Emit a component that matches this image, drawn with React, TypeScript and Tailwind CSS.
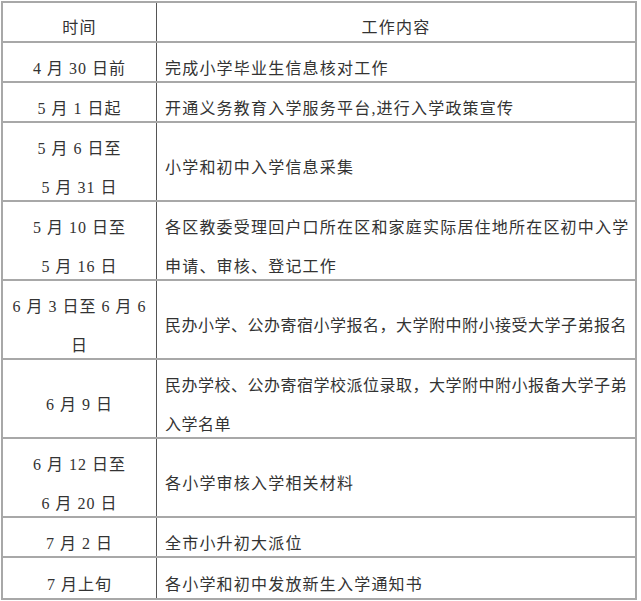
const rows: Array<{ time: string[]; work: string[]; tight?: boolean }> = [
  { time: ["4 月 30 日前"], work: ["完成小学毕业生信息核对工作"] },
  { time: ["5 月 1 日起"], work: ["开通义务教育入学服务平台,进行入学政策宣传"] },
  { time: ["5 月 6 日至", "5 月 31 日"], work: ["小学和初中入学信息采集"] },
  {
    time: ["5 月 10 日至", "5 月 16 日"],
    work: ["各区教委受理回户口所在区和家庭实际居住地所在区初中入学", "申请、审核、登记工作"],
  },
  {
    time: ["6 月 3 日至 6 月 6", "日"],
    work: ["民办小学、公办寄宿小学报名，大学附中附小接受大学子弟报名"],
    tight: true,
  },
  {
    time: ["6 月 9 日"],
    work: ["民办学校、公办寄宿学校派位录取，大学附中附小报备大学子弟", "入学名单"],
    tight: true,
  },
  { time: ["6 月 12 日至", "6 月 20 日"], work: ["各小学审核入学相关材料"] },
  { time: ["7 月 2 日"], work: ["全市小升初大派位"] },
  { time: ["7 月上旬"], work: ["各小学和初中发放新生入学通知书"] },
];

const isDouble = (r: { time: string[]; work: string[] }) =>
  r.time.length > 1 || r.work.length > 1;

export default function App() {
  return (
    <div
      className="w-[641px] h-[601px] bg-white text-[#333] pt-[1px] pl-[1px]"
      style={{ fontFamily: '"Liberation Serif", "Noto Sans CJK SC", serif' }}
    >
      <div className="w-[636px] border-2 border-[#a8a8a8] text-[16px] tracking-[1.2px]">
        {/* header */}
        <div className="flex h-[40px] border-b-2 border-[#a8a8a8]">
          <div className="w-[154px] shrink-0 border-r border-[#555] flex items-center justify-center pt-3">
            时间
          </div>
          <div className="flex-1 flex items-center justify-center pt-3">工作内容</div>
        </div>

        {rows.map((r, i) => {
          const last = i === rows.length - 1;
          return (
            <div
              key={i}
              className={`flex ${isDouble(r) ? "h-[79px]" : "h-[40px]"} ${
                last ? "" : "border-b-2 border-[#a8a8a8]"
              }`}
            >
              <div className="w-[154px] shrink-0 border-r border-[#555] flex flex-col items-center justify-center pt-3 leading-[39px] whitespace-nowrap tracking-[1px]">
                {r.time.map((t, j) => (
                  <div key={j}>{t}</div>
                ))}
              </div>
              <div
                className={`flex-1 flex flex-col justify-center pl-[8px] pt-3 leading-[39px] whitespace-nowrap ${
                  r.tight ? "tracking-[0.5px]" : ""
                }`}
              >
                {r.work.map((w, j) => (
                  <div key={j}>{w}</div>
                ))}
              </div>
            </div>
          );
        })}
      </div>
    </div>
  );
}
